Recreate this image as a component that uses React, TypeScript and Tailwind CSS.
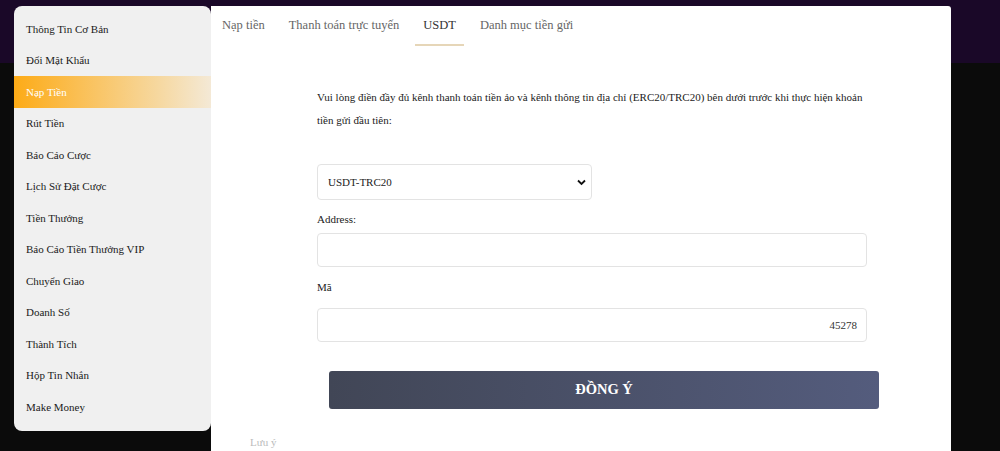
import React, { useState } from 'react';

const menuItems = [
  'Thông Tin Cơ Bản',
  'Đổi Mật Khẩu',
  'Nạp Tiền',
  'Rút Tiền',
  'Báo Cáo Cược',
  'Lịch Sử Đặt Cược',
  'Tiền Thưởng',
  'Báo Cáo Tiền Thưởng VIP',
  'Chuyển Giao',
  'Doanh Số',
  'Thành Tích',
  'Hộp Tin Nhắn',
  'Make Money',
];

const tabs = ['Nạp tiền', 'Thanh toán trực tuyến', 'USDT', 'Danh mục tiền gửi'];

const App: React.FC = () => {
  const [active, setActive] = useState('Nạp Tiền');
  const [tab, setTab] = useState('USDT');
  const [network, setNetwork] = useState('USDT-TRC20');
  const [address, setAddress] = useState('');

  return (
    <div className="w-full h-[451px] overflow-hidden font-['Liberation_Serif','Times_New_Roman',serif] bg-[linear-gradient(to_bottom,#1a0828_63px,#0b0b0b_63px)]">
      <div className="flex items-start pl-[14px] pt-[6px]">
        {/* sidebar */}
        <div className="w-[197px] h-[425px] shrink-0 rounded-lg bg-[#f0f0f0] pt-[7px]">
          {menuItems.map((item) => (
            <div
              key={item}
              onClick={() => setActive(item)}
              className={
                item === active
                  ? 'h-[31.5px] flex items-center pl-3 text-[11px] text-white bg-[linear-gradient(to_right,#fdab17,#f6d9a3_75%,#f4e9d6)] cursor-pointer'
                  : 'h-[31.5px] flex items-center pl-3 text-[11px] text-[#1a1a1a] cursor-pointer'
              }
            >
              {item}
            </div>
          ))}
        </div>

        {/* main panel */}
        <div className="w-[740px] h-[460px] shrink-0 bg-white rounded-tr-[3px]">
          <div className="flex gap-2 pl-[3px] h-[40px]">
            {tabs.map((t) => (
              <button
                key={t}
                onClick={() => setTab(t)}
                className={
                  t === tab
                    ? "px-2 h-full font-['Liberation_Serif',serif] text-[12.5px] text-[#333] border-b-2 border-[#e6d6b8]"
                    : "px-2 h-full font-['Liberation_Serif',serif] text-[12.5px] text-[#666] border-b-2 border-transparent"
                }
              >
                {t}
              </button>
            ))}
          </div>

          <div className="pl-[106px]">
            <div className="w-[550px]">
              <p className="mt-[40px] text-[11px] leading-[23px] text-[#222]">
                Vui lòng điền đầy đủ kênh thanh toán tiền ảo và kênh thông tin địa chỉ (ERC20/TRC20) bên dưới trước khi thực hiện khoản tiền gửi đầu tiên:
              </p>

              <div className="relative mt-[32px] w-[275px]">
                <select
                  value={network}
                  onChange={(e) => setNetwork(e.target.value)}
                  className="w-full h-[36px] appearance-none rounded-[4px] border border-[#e3e3e3] bg-white pl-[10px] font-['Liberation_Serif',serif] text-[11px] text-[#222] outline-none"
                >
                  <option>USDT-TRC20</option>
                  <option>USDT-ERC20</option>
                </select>
                <svg
                  className="pointer-events-none absolute right-[6px] top-[15px]"
                  width="9"
                  height="7"
                  viewBox="0 0 9 7"
                >
                  <path d="M1 1.5 L4.5 5 L8 1.5" stroke="#111" strokeWidth="1.8" fill="none" />
                </svg>
              </div>

              <label className="block mt-[11px] text-[11px] leading-[16px] text-[#222]">Address:</label>
              <input
                value={address}
                onChange={(e) => setAddress(e.target.value)}
                className="block mt-[6px] w-full h-[34px] rounded-[4px] border border-[#e3e3e3] px-[10px] font-['Liberation_Serif',serif] text-[11px] outline-none"
              />

              <label className="block mt-[12px] text-[11px] leading-[16px] text-[#222]">Mã</label>
              <div className="mt-[13px] w-full h-[34px] rounded-[4px] border border-[#e3e3e3] flex items-center justify-end pr-[9px] text-[11px] text-[#333]">
                45278
              </div>

              <button className="ml-[12px] mt-[29px] w-[550px] h-[38px] rounded-[3px] bg-[linear-gradient(to_right,#414656,#545c7d)] font-['Liberation_Serif',serif] text-white font-bold text-[14.5px]">
                ĐỒNG Ý
              </button>
            </div>
          </div>

          <div className="pl-[39px] mt-[25px] text-[11px] text-[#bbb]">Lưu ý</div>
        </div>
      </div>
    </div>
  );
};

export default App;
